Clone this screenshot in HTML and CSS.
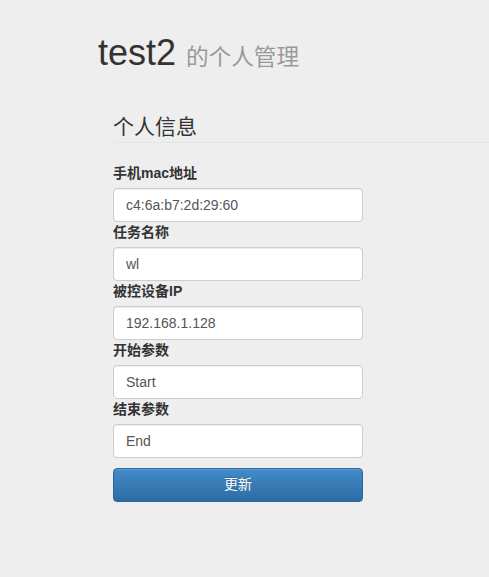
FILE: index.html
```html
<!DOCTYPE html>
<html lang="zh">
<head>
<meta charset="utf-8">
<title>个人管理</title>
<link rel="stylesheet" href="styles.css">
</head>
<body>
<div class="page">
  <h1 class="title">test2 <small>的个人管理</small></h1>
  <form class="form">
    <fieldset>
      <legend>个人信息</legend>
      <label class="lbl">手机mac地址</label>
      <input class="ctl" type="text" value="c4:6a:b7:2d:29:60">
      <label class="lbl">任务名称</label>
      <input class="ctl" type="text" value="wl">
      <label class="lbl">被控设备IP</label>
      <input class="ctl" type="text" value="192.168.1.128">
      <label class="lbl">开始参数</label>
      <input class="ctl" type="text" value="Start">
      <label class="lbl">结束参数</label>
      <input class="ctl" type="text" value="End">
      <button class="btn" type="button">更新</button>
    </fieldset>
  </form>
</div>
</body>
</html>
```
FILE: styles.css
```css
* { box-sizing: border-box; }
html, body { margin: 0; padding: 0; }
body {
  background: #eeeeee;
  font-family: "Liberation Sans", Arial, "Noto Sans CJK SC", sans-serif;
  font-size: 14px;
  line-height: 1.42857;
  color: #333;
}
.page {
  padding: 33px 0 0 98px;
}
.title {
  margin: 0;
  font-size: 36px;
  font-weight: 500;
  line-height: 1.1;
  color: #333;
}
.title small {
  font-size: 22.6px;
  color: #999;
  font-weight: normal;
}
.form {
  margin-top: 39px;
  padding-left: 15px;
}
fieldset {
  margin: 0;
  padding: 0;
  border: 0;
  min-width: 0;
  display: flex;
  flex-direction: column;
  align-items: flex-start;
}
legend {
  display: block;
  width: 100%;
  padding: 0;
  margin-bottom: 20px;
  font-size: 21px;
  line-height: inherit;
  color: #333;
  border: 0;
  border-bottom: 1px solid #e5e5e5;
}
.lbl {
  display: block;
  margin-bottom: 5px;
  font-weight: bold;
  line-height: 20px;
}
.ctl {
  display: block;
  width: 250px;
  height: 34px;
  padding: 6px 12px;
  font-family: inherit;
  font-size: 14px;
  line-height: 1.42857;
  color: #555;
  background: #fff;
  border: 1px solid #ccc;
  border-radius: 4px;
  box-shadow: inset 0 1px 1px rgba(0,0,0,.075);
  margin: 0;
}
.btn {
  display: block;
  margin-top: 10px;
  width: 250px;
  height: 34px;
  padding: 6px 12px;
  font-family: inherit;
  font-size: 14px;
  line-height: 1.42857;
  color: #fff;
  background: linear-gradient(to bottom, #428bca 0, #2d6ca2 100%);
  border: 1px solid #2b669a;
  border-radius: 4px;
  text-shadow: 0 -1px 0 rgba(0,0,0,.2);
  box-shadow: inset 0 1px 0 rgba(255,255,255,.15), 0 1px 1px rgba(0,0,0,.075);
}
```
